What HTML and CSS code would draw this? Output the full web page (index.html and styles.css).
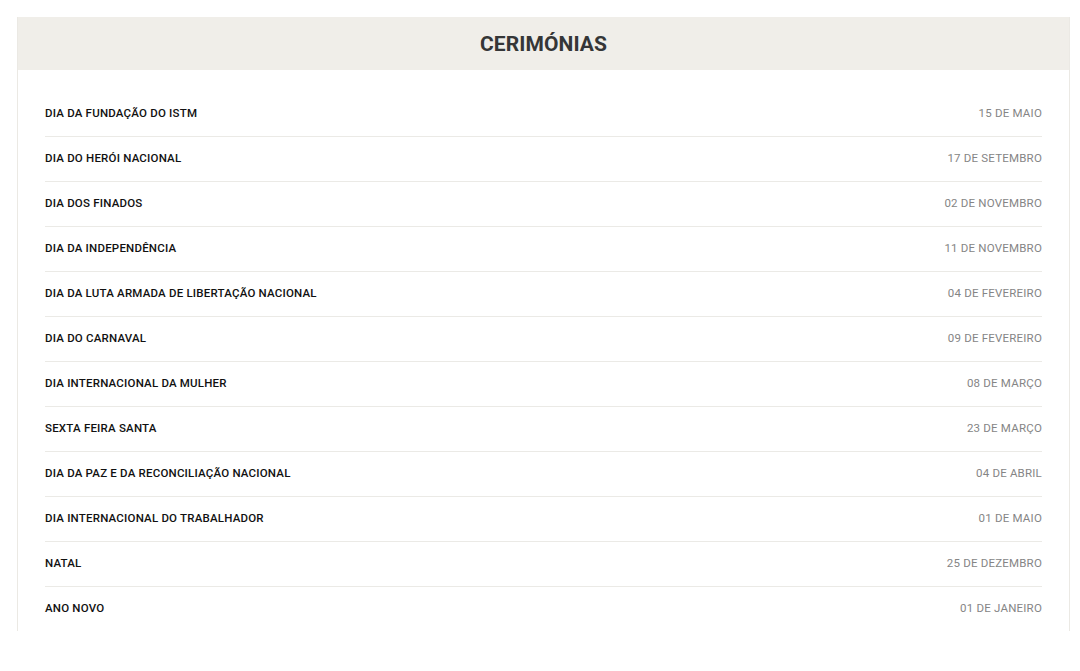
FILE: index.html
```html
<!DOCTYPE html>
<html lang="pt">
<head>
<meta charset="utf-8">
<link rel="stylesheet" href="styles.css">
</head>
<body>
<div class="card">
  <div class="card-header"><h2 class="title">CERIMÓNIAS</h2></div>
  <ul class="list">
    <li class="row"><span class="name">DIA DA FUNDAÇÃO DO ISTM</span><span class="date">15 DE MAIO</span></li>
    <li class="row"><span class="name">DIA DO HERÓI NACIONAL</span><span class="date">17 DE SETEMBRO</span></li>
    <li class="row"><span class="name">DIA DOS FINADOS</span><span class="date">02 DE NOVEMBRO</span></li>
    <li class="row"><span class="name">DIA DA INDEPENDÊNCIA</span><span class="date">11 DE NOVEMBRO</span></li>
    <li class="row"><span class="name">DIA DA LUTA ARMADA DE LIBERTAÇÃO NACIONAL</span><span class="date">04 DE FEVEREIRO</span></li>
    <li class="row"><span class="name">DIA DO CARNAVAL</span><span class="date">09 DE FEVEREIRO</span></li>
    <li class="row"><span class="name">DIA INTERNACIONAL DA MULHER</span><span class="date">08 DE MARÇO</span></li>
    <li class="row"><span class="name">SEXTA FEIRA SANTA</span><span class="date">23 DE MARÇO</span></li>
    <li class="row"><span class="name">DIA DA PAZ E DA RECONCILIAÇÃO NACIONAL</span><span class="date">04 DE ABRIL</span></li>
    <li class="row"><span class="name">DIA INTERNACIONAL DO TRABALHADOR</span><span class="date">01 DE MAIO</span></li>
    <li class="row"><span class="name">NATAL</span><span class="date">25 DE DEZEMBRO</span></li>
    <li class="row"><span class="name">ANO NOVO</span><span class="date">01 DE JANEIRO</span></li>
  </ul>
</div>
</body>
</html>
```
FILE: styles.css
```css
html, body {
  margin: 0;
  padding: 0;
  background: #ffffff;
}
body {
  padding: 17px 10px 0 17px;
  font-family: Roboto, "Liberation Sans", sans-serif;
}
.card {
  width: 1051px;
  border-left: 1px solid #ebe9e4;
  border-right: 1px solid #ebe9e4;
}
.card-header {
  background: #f0eee9;
  height: 53px;
  display: flex;
  align-items: center;
  justify-content: center;
}
.title {
  margin: 0;
  font-size: 21px;
  font-weight: 700;
  color: #353637;
  letter-spacing: 0.1px;
}
.list {
  list-style: none;
  margin: 0;
  padding: 22px 27px 0 27px;
}
.row {
  display: flex;
  justify-content: space-between;
  align-items: center;
  height: 42px;
  padding-bottom: 2px;
  border-bottom: 1px solid #ebeae6;
  font-size: 11.5px;
  letter-spacing: 0.2px;
}
.row:last-child {
  border-bottom: none;
}
.name {
  color: #111111;
  font-weight: 500;
}
.date {
  color: #858585;
  font-weight: 400;
}
```
